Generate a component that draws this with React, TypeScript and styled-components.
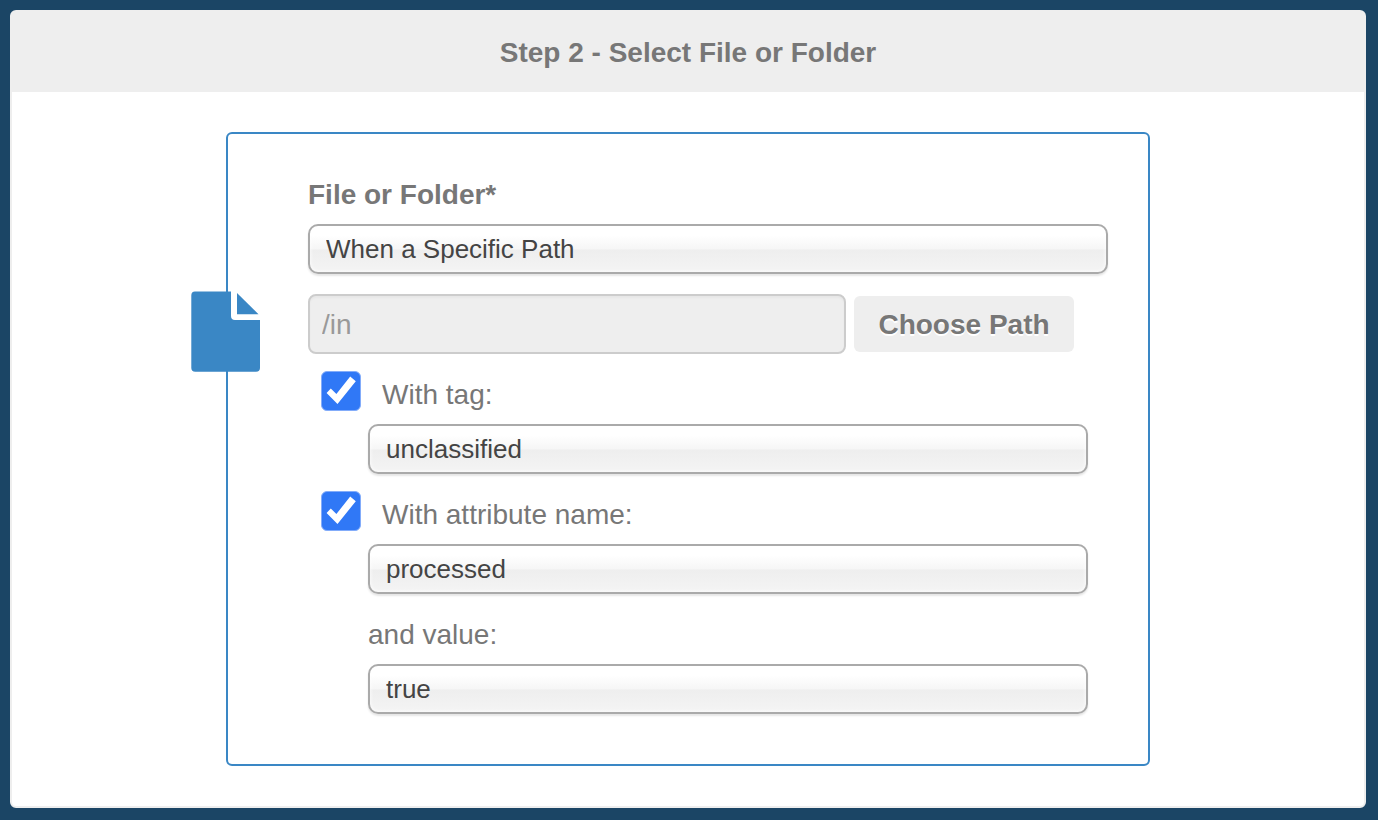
import React, { useState } from "react";
import styled, { createGlobalStyle } from "styled-components";

const GlobalStyle = createGlobalStyle`
  *, *::before, *::after { box-sizing: border-box; }
  html { min-height: 100%; background: #1b4565; }
  body {
    margin: 0;
    font-family: "Liberation Sans", Arial, sans-serif;
    font-size: 28px;
    line-height: 40px;
    color: #777;
  }
`;

const Page = styled.main`
  padding: 10px 12px 12px 10px;
`;

const Panel = styled.section`
  background: #fff;
  border: 2px solid #eee;
  border-radius: 6px;
`;

const PanelHeader = styled.header`
  padding: 21px 20px 19px;
  background: #eee;
  text-align: center;
`;

const Title = styled.h1`
  margin: 0;
  font-size: 28px;
  line-height: 40px;
  font-weight: bold;
`;

const PanelBody = styled.div`
  padding: 40px;
`;

const StepBox = styled.form`
  position: relative;
  max-width: 924px;
  margin: 0 auto;
  padding: 41px 40px 50px 80px;
  border: 2px solid #3a87c5;
  border-radius: 6px;
`;

const StepIcon = styled.svg`
  position: absolute;
  left: -37px;
  top: 157px;
  width: 69px;
  height: 81px;
  fill: #3a87c5;
`;

const FieldLabel = styled.label<{ $strong?: boolean }>`
  display: block;
  margin-bottom: 9px;
  font-weight: ${(p) => (p.$strong ? "bold" : "normal")};
`;

const Select = styled.select`
  display: block;
  width: 100%;
  height: 50px;
  padding: 0 16px;
  appearance: none;
  border: 2px solid #aaa;
  border-radius: 10px;
  background: linear-gradient(#fff 20%, #f6f6f6 50%, #eee 52%, #f4f4f4 100%) padding-box;
  box-shadow: inset 0 0 4px #fff, 0 2px 2px rgba(0, 0, 0, 0.1);
  color: #444;
  font-family: inherit;
  font-size: 26px;
`;

const PathRow = styled.div`
  display: flex;
  align-items: center;
  gap: 8px;
  margin-top: 20px;
  padding-right: 34px;
`;

const PathInput = styled.input`
  flex: 1;
  min-width: 0;
  height: 60px;
  padding: 2px 12px 0;
  border: 2px solid #ccc;
  border-radius: 8px;
  background: #eee;
  box-shadow: inset 0 2px 2px rgba(0, 0, 0, 0.03);
  color: #999;
  font-family: inherit;
  font-size: 28px;
`;

const Button = styled.button`
  min-width: 220px;
  height: 56px;
  padding: 2px 24px 0;
  border: 0;
  border-radius: 6px;
  background: #eee;
  color: #777;
  font-family: inherit;
  font-size: 28px;
  font-weight: bold;
  text-shadow: 0 2px 0 #fff;
`;

const CheckRow = styled.div`
  display: flex;
  align-items: flex-start;
  gap: 21px;
  margin: 17px 0 5px 13px;
`;

const CheckLabel = styled.label`
  line-height: 48px;
`;

const Tick = styled.span`
  display: grid;
  width: 40px;
  height: 40px;

  & > * { grid-area: 1 / 1; }
`;

const TickInput = styled.input`
  width: 40px;
  height: 40px;
  margin: 0;
  appearance: none;
  border: 1px solid #83acfa;
  border-radius: 6px;
  background: #fff;

  &:checked { background: #3078f6; }
  & + svg { visibility: hidden; }
  &:checked + svg { visibility: visible; }
`;

const TickMark = styled.svg`
  width: 40px;
  height: 40px;
  fill: #fff;
  pointer-events: none;
`;

const Nested = styled.div<{ $spaced?: boolean }>`
  margin-top: ${(p) => (p.$spaced ? "21px" : "0")};
  padding: 0 20px 0 60px;
`;

function CheckField({ id, label }: { id: string; label: string }) {
  const [on, setOn] = useState(true);
  return (
    <CheckRow>
      <Tick>
        <TickInput id={id} type="checkbox" checked={on} onChange={(e) => setOn(e.target.checked)} />
        <TickMark viewBox="0 0 40 40" aria-hidden="true">
          <path d="M5.6 22 9.8 17.6 15.4 23 29.2 5.6 34.8 10.2 16.5 33Z" />
        </TickMark>
      </Tick>
      <CheckLabel htmlFor={id}>{label}</CheckLabel>
    </CheckRow>
  );
}

export default function App() {
  return (
    <>
      <GlobalStyle />
      <Page>
        <Panel>
          <PanelHeader>
            <Title>Step 2 - Select File or Folder</Title>
          </PanelHeader>
          <PanelBody>
            <StepBox onSubmit={(e) => e.preventDefault()}>
              <StepIcon viewBox="0 0 69 81" aria-hidden="true">
                <path d="M4 0.5H40V25Q40 29 44 29H69V77Q69 80.7 65 80.7H4.3Q0.3 80.7 0.3 77V4.5Q0.3 0.5 4 0.5Z" />
                <path d="M46 2 67.5 23.3H46Z" />
              </StepIcon>

              <FieldLabel $strong htmlFor="target">File or Folder*</FieldLabel>
              <Select id="target">
                <option>When a Specific Path</option>
              </Select>

              <PathRow>
                <PathInput aria-label="Path" defaultValue="/in" readOnly />
                <Button type="button">Choose Path</Button>
              </PathRow>

              <CheckField id="with-tag" label="With tag:" />
              <Nested>
                <Select aria-label="Tag">
                  <option>unclassified</option>
                </Select>
              </Nested>

              <CheckField id="with-attribute" label="With attribute name:" />
              <Nested>
                <Select aria-label="Attribute name">
                  <option>processed</option>
                </Select>
              </Nested>

              <Nested $spaced>
                <FieldLabel htmlFor="value">and value:</FieldLabel>
                <Select id="value">
                  <option>true</option>
                </Select>
              </Nested>
            </StepBox>
          </PanelBody>
        </Panel>
      </Page>
    </>
  );
}
